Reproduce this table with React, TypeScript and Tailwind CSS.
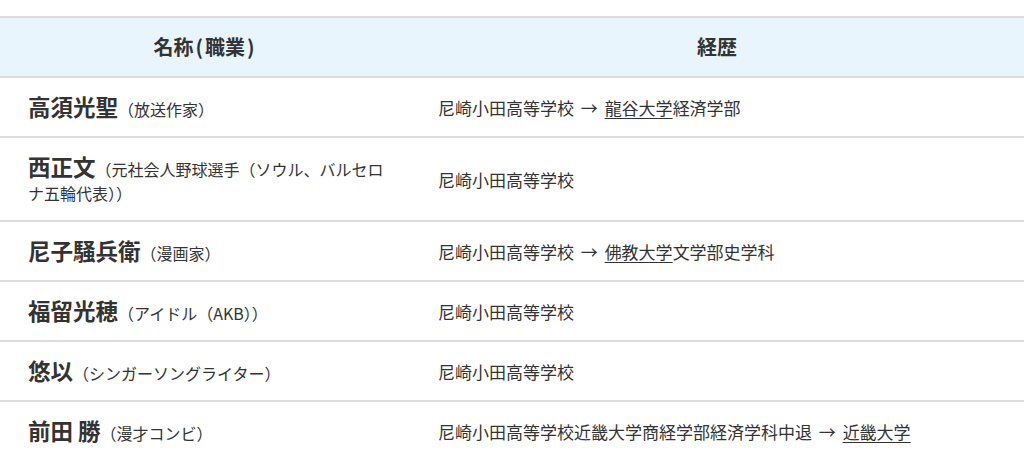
import React from "react";

type Row = { name: string; job: string; career: React.ReactNode };

const U = ({ children }: { children: React.ReactNode }) => (
  <span className="underline underline-offset-[3px] decoration-1">{children}</span>
);

const Arrow = () => <span className="mx-[3px]"> → </span>;

const rows: Row[] = [
  {
    name: "高須光聖",
    job: "（放送作家）",
    career: (
      <>
        尼崎小田高等学校<Arrow /><U>龍谷大学</U>経済学部
      </>
    ),
  },
  {
    name: "西正文",
    job: "（元社会人野球選手（ソウル、バルセロナ五輪代表））",
    career: <>尼崎小田高等学校</>,
  },
  {
    name: "尼子騒兵衛",
    job: "（漫画家）",
    career: (
      <>
        尼崎小田高等学校<Arrow /><U>佛教大学</U>文学部史学科
      </>
    ),
  },
  { name: "福留光穂", job: "（アイドル（AKB））", career: <>尼崎小田高等学校</> },
  { name: "悠以", job: "（シンガーソングライター）", career: <>尼崎小田高等学校</> },
  {
    name: "前田 勝",
    job: "（漫才コンビ）",
    career: (
      <>
        尼崎小田高等学校近畿大学商経学部経済学科中退<Arrow /><U>近畿大学</U>
      </>
    ),
  },
];

export default function App() {
  return (
    <div
      className="w-[1024px] h-[460px] bg-white overflow-hidden text-[#333]"
      style={{ fontFamily: '"Noto Sans CJK JP", "Noto Sans", sans-serif' }}
    >
      <table className="mt-4 w-full border-collapse table-fixed">
        <colgroup>
          <col className="w-[410px]" />
          <col />
        </colgroup>
        <thead>
          <tr className="bg-[#e8f5fc] border-y-2 border-[#dcdcdc]">
            <th className="h-[60px] text-[20px] font-bold text-center align-middle">
              名称<span className="mx-[2px]">(</span>職業<span className="mx-[2px]">)</span>
            </th>
            <th className="h-[60px] text-[20px] font-bold text-center align-middle">経歴</th>
          </tr>
        </thead>
        <tbody>
          {rows.map((r, i) => (
            <tr key={i} className="border-b-2 border-[#dcdcdc]">
              <td className="pl-7 pr-5 py-[15px] align-middle text-[16px] leading-[24px]">
                <span className="text-[22.5px] leading-[27px] font-bold">{r.name}</span>
                {r.job}
              </td>
              <td className="pl-7 pr-5 py-[15px] align-middle text-[17px] leading-[27px]">
                {r.career}
              </td>
            </tr>
          ))}
        </tbody>
      </table>
    </div>
  );
}
